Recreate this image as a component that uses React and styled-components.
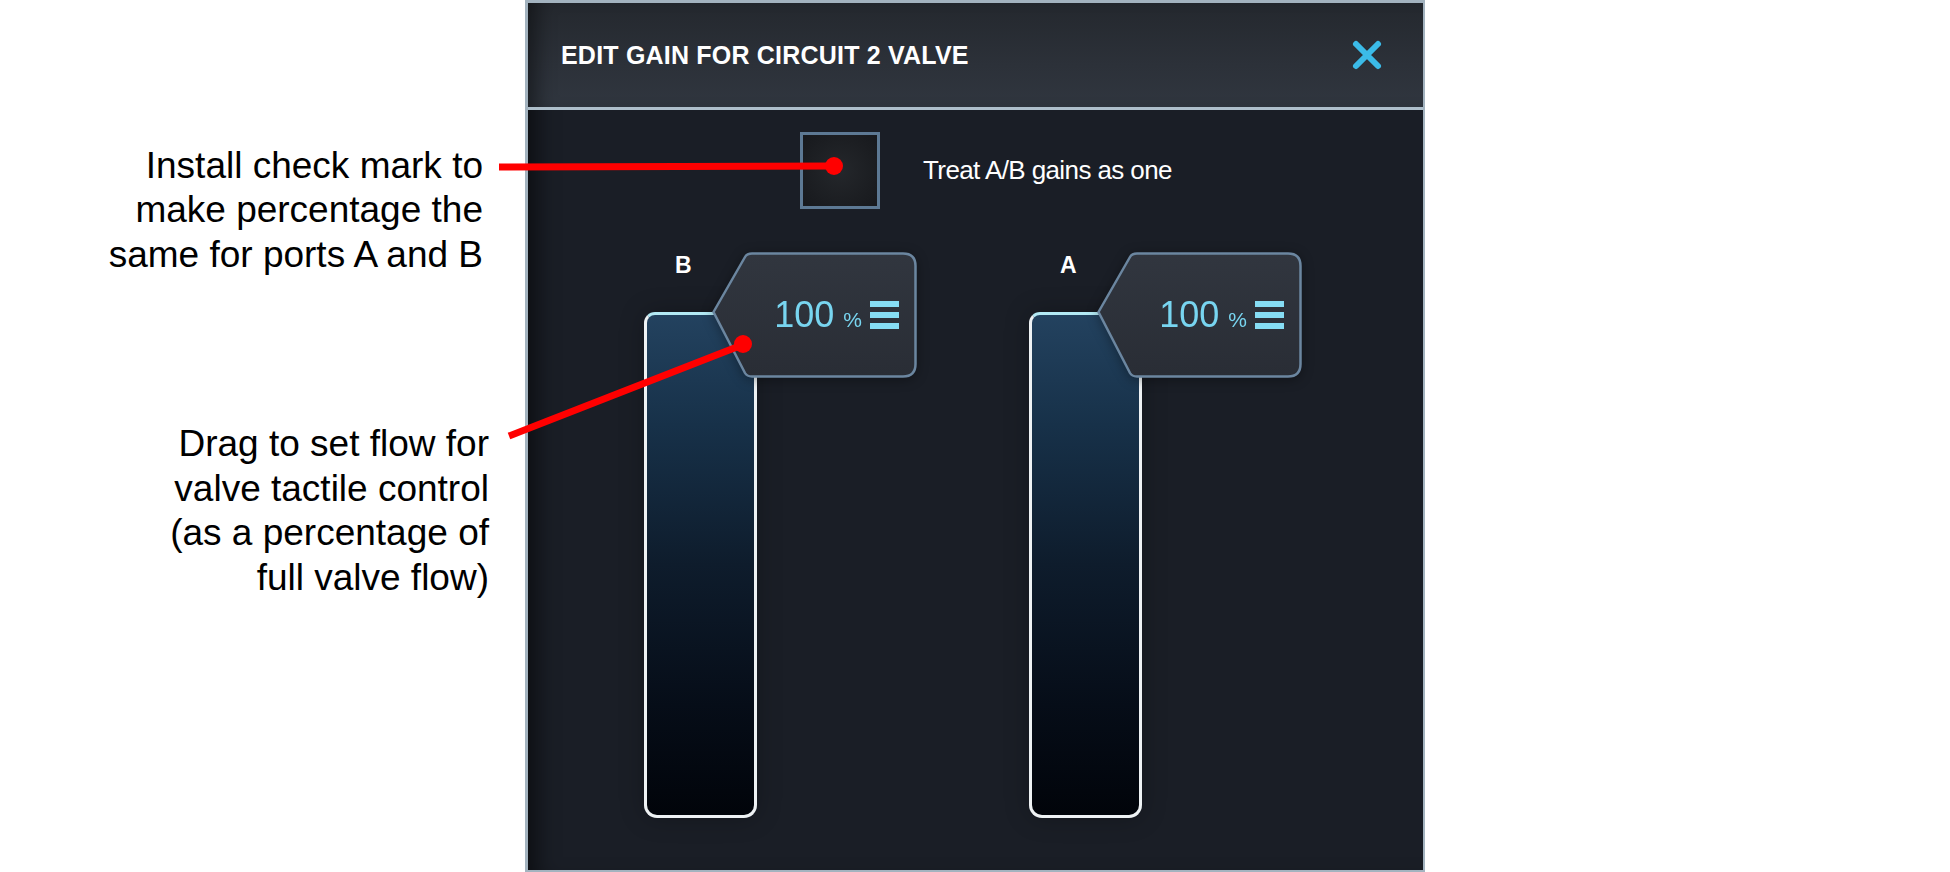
import React from 'react';
import styled, { createGlobalStyle } from 'styled-components';

const GlobalStyle = createGlobalStyle`
  html, body {
    margin: 0;
    padding: 0;
    background: #ffffff;
  }
  body {
    font-family: "Liberation Sans", Arial, sans-serif;
  }
`;

const Page = styled.div`
  position: relative;
  display: flex;
  width: 1950px;
  height: 872px;
  overflow: hidden;
`;

const Notes = styled.div`
  width: 525px;
  flex-shrink: 0;
  box-sizing: border-box;
  text-align: right;
  color: #000;
  font-size: 37px;
  line-height: 44.8px;
`;

const Note = styled.p`
  margin: ${(p) => p.$top}px ${(p) => p.$right}px 0 0;
`;

const Panel = styled.section`
  width: 900px;
  height: 872px;
  flex-shrink: 0;
  box-sizing: border-box;
  border: 3px solid #a3b3bf;
  border-right-width: 2px;
  border-bottom-width: 2px;
  background: #1a1e26;
  box-shadow: inset 22px 0 22px -14px rgba(0, 0, 0, 0.55);
  display: flex;
  flex-direction: column;
`;

const Header = styled.header`
  height: 104px;
  flex-shrink: 0;
  display: flex;
  align-items: center;
  justify-content: space-between;
  padding: 0 40px 0 33px;
  background: linear-gradient(180deg, #24282e 0%, #2c3139 60%, #30363f 100%);
  border-bottom: 3px solid #aebfcb;
  box-shadow: inset 20px 0 20px -12px rgba(0, 0, 0, 0.45);
`;

const Title = styled.h1`
  margin: 0;
  color: #ffffff;
  font-size: 25px;
  font-weight: 700;
  letter-spacing: 0.2px;
`;

const CloseButton = styled.button`
  width: 32px;
  height: 32px;
  padding: 0;
  border: 0;
  background: none;
  display: flex;
  cursor: pointer;
`;

const Body = styled.div`
  flex: 1;
  display: flex;
  flex-direction: column;
  padding-top: 22px;
`;

const CheckRow = styled.label`
  display: flex;
  align-items: center;
  gap: 43px;
  padding-left: 272px;
`;

const CheckBox = styled.span`
  width: 80px;
  height: 77px;
  box-sizing: border-box;
  border: 3px solid #5d7994;
  background: radial-gradient(circle at 50% 50%, #24272b 0%, #1b1d21 70%, #17191d 100%);
`;

const CheckText = styled.span`
  color: #ffffff;
  font-size: 26px;
  letter-spacing: -0.6px;
`;

const SliderRow = styled.div`
  display: flex;
  gap: 112px;
  margin-top: 43px;
  padding-left: 116px;
`;

const SliderGroup = styled.div`
  position: relative;
  width: 273px;
  display: flex;
  flex-direction: column;
`;

const PortLabel = styled.div`
  height: 60px;
  padding-left: 31px;
  color: #ffffff;
  font-size: 23px;
  font-weight: 700;
  line-height: 26px;
`;

const Bar = styled.div`
  width: 113px;
  height: 506px;
  box-sizing: border-box;
  border: 3px solid #eef2f4;
  border-top-color: #b3eaf5;
  border-radius: 11px 11px 13px 13px;
  background: linear-gradient(180deg, #23425f 0%, #173149 22%, #0e1c2c 50%, #060d18 78%, #01040a 100%);
  box-shadow: 0 0 24px rgba(0, 0, 0, 0.25);
`;

const Tag = styled.div`
  position: absolute;
  left: 68px;
  top: 0;
  width: 205px;
  height: 126px;
  display: grid;
  filter: drop-shadow(0 2px 6px rgba(0, 0, 0, 0.35));

  & > * {
    grid-area: 1 / 1;
  }
`;

const TagContent = styled.div`
  display: flex;
  align-items: center;
  justify-content: flex-end;
  padding-right: 18px;
  color: #78d5f0;
`;

const Value = styled.span`
  display: flex;
  align-items: baseline;
  line-height: 1;
`;

const Number = styled.span`
  font-size: 36px;
`;

const Unit = styled.span`
  font-size: 21px;
  margin-left: 9px;
`;

const MenuIcon = styled.span`
  width: 29px;
  height: 28px;
  margin-left: 8px;
  display: flex;
  flex-direction: column;
  justify-content: space-between;

  & > i {
    display: block;
    height: 6px;
    background: #86ddf4;
  }
`;

const Overlay = styled.svg`
  position: absolute;
  left: 0;
  top: 0;
  pointer-events: none;
`;

function TagShape() {
  return (
    <svg width="205" height="126" viewBox="0 0 205 126">
      <defs>
        <linearGradient id="tagFill" x1="0" y1="0" x2="0" y2="1">
          <stop offset="0" stopColor="#31363f" />
          <stop offset="1" stopColor="#292d35" />
        </linearGradient>
      </defs>
      <path
        d="M1.5 60 L33 5 Q35 1.5 40 1.5 H191 Q203.5 1.5 203.5 14 V112 Q203.5 124.5 191 124.5 H40 Q35 124.5 33 121 Z"
        fill="url(#tagFill)"
        stroke="#6b86a0"
        strokeWidth="2.5"
        strokeLinejoin="round"
      />
    </svg>
  );
}

function Slider({ port, value }) {
  return (
    <SliderGroup>
      <PortLabel>{port}</PortLabel>
      <Bar />
      <Tag>
        <TagShape />
        <TagContent>
          <Value>
            <Number>{value}</Number>
            <Unit>%</Unit>
          </Value>
          <MenuIcon>
            <i />
            <i />
            <i />
          </MenuIcon>
        </TagContent>
      </Tag>
    </SliderGroup>
  );
}

export default function App() {
  return (
    <>
      <GlobalStyle />
      <Page>
        <Notes>
          <Note $top={143.5} $right={42}>
            Install check mark to
            <br />
            make percentage the
            <br />
            same for ports A and B
          </Note>
          <Note $top={144} $right={36}>
            Drag to set flow for
            <br />
            valve tactile control
            <br />
            (as a percentage of
            <br />
            full valve flow)
          </Note>
        </Notes>

        <Panel>
          <Header>
            <Title>EDIT GAIN FOR CIRCUIT 2 VALVE</Title>
            <CloseButton aria-label="Close">
              <svg width="32" height="32" viewBox="0 0 32 32">
                <path
                  d="M5 5 L27 27 M27 5 L5 27"
                  stroke="#3bbbe8"
                  strokeWidth="6"
                  strokeLinecap="round"
                />
              </svg>
            </CloseButton>
          </Header>

          <Body>
            <CheckRow>
              <CheckBox />
              <CheckText>Treat A/B gains as one</CheckText>
            </CheckRow>

            <SliderRow>
              <Slider port="B" value={100} />
              <Slider port="A" value={100} />
            </SliderRow>
          </Body>
        </Panel>

        <Overlay width="1950" height="872" viewBox="0 0 1950 872">
          <line x1="499" y1="167" x2="833" y2="166" stroke="#ff0000" strokeWidth="7" />
          <circle cx="834" cy="166" r="9" fill="#ff0000" />
          <line x1="509" y1="436" x2="742" y2="345" stroke="#ff0000" strokeWidth="7" />
          <circle cx="743" cy="344" r="9" fill="#ff0000" />
        </Overlay>
      </Page>
    </>
  );
}
